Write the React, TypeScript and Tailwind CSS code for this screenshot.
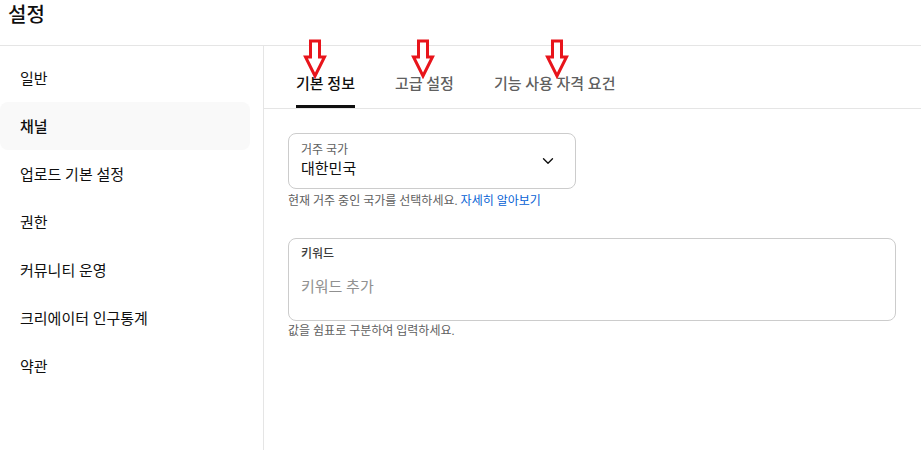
import { ChevronDown } from 'lucide-react';

const menu = ['일반', '채널', '업로드 기본 설정', '권한', '커뮤니티 운영', '크리에이터 인구통계', '약관'];
const tabs = ['기본 정보', '고급 설정', '기능 사용 자격 요건'];

function RedArrow({ left }: { left: number }) {
  return (
    <svg
      className="absolute top-[-7px] pointer-events-none"
      style={{ left }}
      width="24"
      height="40"
      viewBox="0 0 24 40"
    >
      <path
        d="M7.5 2 H16.5 V18 H21.5 L12 37 L2.5 18 H7.5 Z"
        fill="white"
        stroke="#e8141b"
        strokeWidth="3"
        strokeLinejoin="miter"
      />
    </svg>
  );
}

export default function App() {
  return (
    <div className="w-[921px] h-[450px] bg-white overflow-hidden text-[#0f0f0f] font-['Roboto','Noto_Sans_CJK_KR',sans-serif]">
      {/* 헤더 */}
      <div className="h-[46px] border-b border-[#e5e5e5] pl-2 pt-[1px]">
        <h1 className="text-[20px] leading-[28px] font-medium">설정</h1>
      </div>

      <div className="flex h-[404px]">
        {/* 사이드바 */}
        <nav className="w-[264px] shrink-0 border-r border-[#e5e5e5] pt-2">
          {menu.map((m) => (
            <div
              key={m}
              className={`w-[250px] h-12 flex items-center pl-5 pt-[2px] text-[15px] rounded-lg ${
                m === '채널' ? 'bg-[#f9f9f9] font-medium' : ''
              }`}
            >
              {m}
            </div>
          ))}
        </nav>

        {/* 본문 */}
        <div className="flex-1 relative">
          <div className="h-[63px] border-b border-[#e5e5e5] pl-8 flex gap-10">
            {tabs.map((t, i) => (
              <div
                key={t}
                className={`flex items-end pb-[11px] text-[15px] leading-5 border-b-[3px] font-medium ${
                  i === 0 ? 'border-[#0f0f0f] text-[#0f0f0f]' : 'border-transparent text-[#606060]'
                }`}
              >
                {t}
              </div>
            ))}
          </div>

          <RedArrow left={39} />
          <RedArrow left={147} />
          <RedArrow left={281} />

          <div className="pl-6 pt-6">
            <div className="w-[288px] h-[56px] border border-[#cccccc] rounded-lg flex items-center justify-between pl-3 pr-[18px]">
              <div className="flex flex-col">
                <span className="text-[12px] leading-4 text-[#606060]">거주 국가</span>
                <span className="text-[15px] leading-[22px]">대한민국</span>
              </div>
              <ChevronDown size={18} strokeWidth={1.8} className="text-[#0f0f0f]" />
            </div>
            <p className="text-[12px] leading-4 mt-[4px] text-[#606060]">
              현재 거주 중인 국가를 선택하세요. <span className="text-[#065fd4]">자세히 알아보기</span>
            </p>

            <div className="mt-[29px] w-[608px] h-[83px] border border-[#cccccc] rounded-lg pl-3 pt-[7px]">
              <div className="text-[12px] leading-4 font-medium text-[#3d3d3d]">키워드</div>
              <div className="mt-[15px] text-[15px] leading-5 text-[#909090]">키워드 추가</div>
            </div>
            <p className="text-[12px] leading-4 mt-[2px] text-[#606060]">값을 쉼표로 구분하여 입력하세요.</p>
          </div>
        </div>
      </div>
    </div>
  );
}
